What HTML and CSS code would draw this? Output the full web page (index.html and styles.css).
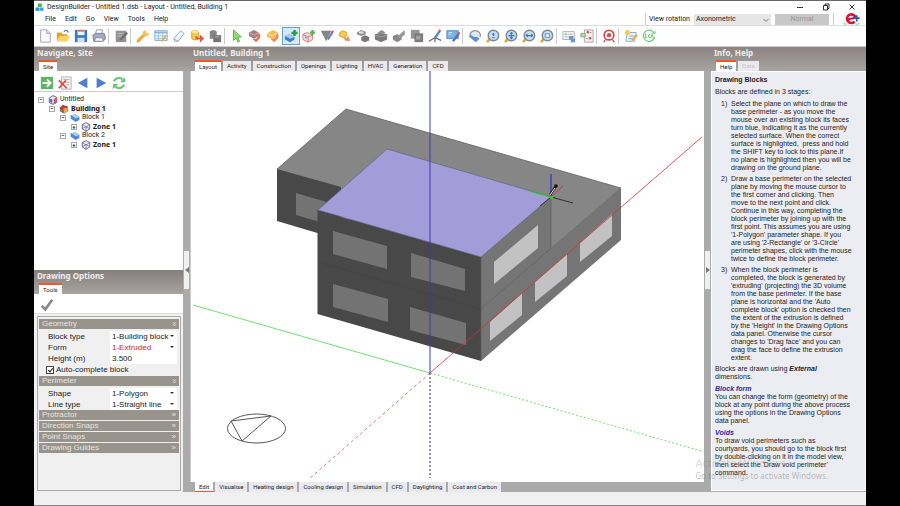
FILE: index.html
```html
<!DOCTYPE html>
<html lang="en">
 <head>
  <meta charset="UTF-8">
  <title>DesignBuilder</title>
  <link rel="stylesheet" href="styles.css">
 </head>
 <body>
  <svg class="defs" aria-hidden="true">
   <symbol id="lens" viewBox="0 0 16 16">
    <path d="M5 11L2 14" stroke="#e3ab35" stroke-width="3" stroke-linecap="round"/>
    <circle cx="8.5" cy="7.5" r="6" fill="#c3dcf2" stroke="#7f8790" stroke-width="1.6"/>
   </symbol>
   <symbol id="block" viewBox="0 0 16 16">
    <path d="M1 4L8 2L15 6V11L9 14L1 9Z" fill="#4a8fd8"/>
    <path d="M1 4L8 2L15 6L9 9Z" fill="#a9d0f5"/>
    <path d="M1 4L9 9V14" fill="none" stroke="#2f6db5"/>
   </symbol>
   <symbol id="zone" viewBox="0 0 16 16">
    <path d="M8 1L14 4V11L8 15L2 11V4Z" fill="#f0effa" stroke="#55528a" stroke-width="1.4"/>
    <path d="M2 4L8 8L14 4M8 8V15M2 11L8 7L14 11" fill="none" stroke="#55528a"/>
   </symbol>
  </svg>

  <div class="app">
   <header class="title">
    <svg class="logo" viewBox="0 0 16 16"><path d="M5 1H12V7H5Z" fill="#3cb54a"/><path d="M1 8H8V14H1Z" fill="#2b8fd6"/><path d="M9 8H15V14H9Z" fill="#35a7c9"/><path d="M5 1L7 0H13L12 1Z" fill="#8bdc8e"/></svg>
    <h1>DesignBuilder - Untitled 1.dsb - Layout - Untitled, Building 1</h1>
    <div class="win">
     <button aria-label="Minimize"><svg viewBox="0 0 8 8"><path d="M1 4.500H7"/></svg></button>
     <button aria-label="Restore"><svg viewBox="0 0 8 8"><path d="M1.500 2.500H5.500V7H1.500ZM3 2.500V1H7V5.500H5.500"/></svg></button>
     <button aria-label="Close"><svg viewBox="0 0 8 8"><path d="M1.500 1.500L6.500 6.500M6.500 1.500L1.500 6.500"/></svg></button>
    </div>
   </header>

   <div class="menubar">
    <nav class="menu">
     <button>File</button>
     <button>Edit</button>
     <button>Go</button>
     <button>View</button>
     <button>Tools</button>
     <button>Help</button>
    </nav>
    <div class="rotation">
     <label for="rot">View rotation</label>
     <span class="drop"><select id="rot"><option>Axonometric</option></select><svg viewBox="0 0 8 8"><path d="M1.500 3L4 5.500L6.500 3"/></svg></span>
     <button class="normal" disabled>Normal</button>
    </div>
    <svg class="brand" viewBox="0 0 20 14"><path d="M14 5A5 5 0 1 0 13 10" fill="none" stroke="#dd1133" stroke-width="3"/><path d="M5 7.500L14 5.500" stroke="#dd1133" stroke-width="2.500"/><path d="M12 6H19M15.500 2.500V10" stroke="#2a56b5" stroke-width="2"/><path d="M1 11V13H4M14 13H18V11" fill="none" stroke="#7cc896"/></svg>
   </div>

   <div class="toolbar">
    <button aria-label="New"><svg viewBox="0 0 16 16"><path d="M3 1H10L14 5V15H3Z" fill="#fbfbff" stroke="#9a9ab8"/><path d="M10 1V5H14" fill="#dde" stroke="#9a9ab8"/></svg></button>
    <button aria-label="Open"><svg viewBox="0 0 16 16"><path d="M1 4H6L8 6H13V14H1Z" fill="#e2a62e"/><path d="M4 8H16L13 14H1Z" fill="#fbd465"/><path d="M9 3C11 1 13 1 14 4" fill="none" stroke="#4a86c8" stroke-width="1.500"/></svg></button>
    <button aria-label="Save"><svg viewBox="0 0 16 16"><path d="M1 1H15V15H1Z" fill="#3b78c8"/><path d="M4 1H12V7H4Z" fill="#eef5fd"/><path d="M4 1H12V3H4Z" fill="#e26b51"/><path d="M4 10H12V15H4Z" fill="#cfdff0"/></svg></button>
    <button aria-label="Print"><svg viewBox="0 0 16 16"><path d="M5 1H12L11 7H4Z" fill="#fff" stroke="#8c8ca0"/><path d="M1 7L4 5H14L15 8V12L11 14H2Z" fill="#a9a9bd" stroke="#777790"/><path d="M4 10H12L13 14H3Z" fill="#f5f5fa" stroke="#8888a0"/></svg></button>
    <i></i>
    <button aria-label="Edit"><svg viewBox="0 0 16 16"><path d="M2 2H14V15H2Z" fill="#929292"/><path d="M4 5H11M4 8H9" stroke="#c4c4c4"/><path d="M6 12L14 3L16 5L8 13Z" fill="#6e6e6e"/></svg></button>
    <i></i>
    <button aria-label="Settings"><svg viewBox="0 0 16 16"><path d="M2.500 13.500L10 6" stroke="#edaa2e" stroke-width="3.500" stroke-linecap="round"/><path d="M14.500 4A3.500 3.500 0 1 1 11.500 1.500L11 4L12.500 5Z" fill="#f6c04b"/></svg></button>
    <button aria-label="Table"><svg viewBox="0 0 16 16"><path d="M1 2H15V13H1Z" fill="#fff" stroke="#6aa0d6"/><path d="M1 3H15V5H1Z" fill="#7fb2e4"/><path d="M1 8H15M1 11H15M5 3V13M10 3V13" stroke="#8db7df"/><path d="M9 14L14 7" stroke="#e2b14d" stroke-width="2"/></svg></button>
    <button aria-label="Erase"><svg viewBox="0 0 16 16"><path d="M2 11L10 2L14 5L7 14L3 14Z" fill="#eef5ff" stroke="#86a6cd"/><path d="M2 11L7 14" stroke="#86a6cd"/></svg></button>
    <button aria-label="Load data"><svg viewBox="0 0 16 16"><path d="M2 3C4 1 8 1 10 3V11C8 13 4 13 2 11Z" fill="#f3cb50" stroke="#cf9b28"/><ellipse cx="6" cy="3" rx="4" ry="1.500" fill="#fbe69c"/><path d="M7 8V11H12M12 8V14L15 11Z" fill="#e8794f" stroke="#dc5b3d" stroke-width="1.500"/></svg></button>
    <button aria-label="Library"><svg viewBox="0 0 16 16"><path d="M2 3C4 1 8 1 10 3V11H2Z" fill="#858585"/><path d="M6 7H15V15H6Z" fill="#747474"/><path d="M8 9H13" stroke="#c2c2c2"/></svg></button>
    <i></i>
    <button aria-label="Select"><svg viewBox="0 0 16 16"><path d="M4 1L13 9L9 9.500L11 14L9 15L7 10.500L4 13Z" fill="#8ed870" stroke="#62b048"/></svg></button>
    <button aria-label="Move block"><svg viewBox="0 0 16 16"><path d="M1 4L7 1L12 4V8L7 11L1 8Z" fill="#a18080"/><path d="M1 4L7 7L12 4" fill="none" stroke="#d6bcbc"/><path d="M12 4C16 7 14 12 9 15L5 11L9 11C11 10 12 7 12 4Z" fill="#e3795c"/></svg></button>
    <button aria-label="Rotate"><svg viewBox="0 0 16 16"><path d="M1 5L8 1L14 4V8L8 12L1 9Z" fill="#f0c05a"/><path d="M1 5L7 8L14 4" fill="none" stroke="#fbe7a8"/><path d="M13 5C16 8 14 12 9 15L5 11L9 11C11 10 12 8 13 5Z" fill="#e88e5e"/></svg></button>
    <button class="on" aria-label="Add block"><svg viewBox="0 0 16 16"><path d="M1 8L6 6L12 9V12L7 15L1 12Z" fill="#3c7fce"/><path d="M1 8L6 6L12 9L7 11Z" fill="#a7cdf2"/><path d="M12 1V8M8.500 4.500H15.500" stroke="#2ea23a" stroke-width="3"/></svg></button>
    <button aria-label="Add void"><svg viewBox="0 0 16 16"><path d="M1 6L6 4L12 7V12L7 15L1 12Z" fill="#f3dcdc" stroke="#d47a7a"/><path d="M1 6L7 9L12 7M7 9V15" fill="none" stroke="#d47a7a"/><path d="M3 10L6 12V9.500L3 8Z" fill="#84b4e4"/><path d="M12 1V7M9 4H15" stroke="#4db956" stroke-width="2.500"/></svg></button>
    <button aria-label="Draw surface"><svg viewBox="0 0 16 16"><path d="M1 2H13L7 14Z" fill="#848484"/><path d="M9 12L14 4" stroke="#5a83ca" stroke-width="2.500"/><path d="M13.500 4.500L15 2" stroke="#d55" stroke-width="2.500"/></svg></button>
    <button aria-label="Stretch"><svg viewBox="0 0 16 16"><path d="M2 4L6 2L10 4V8L6 10L2 8Z" fill="#f1cc4b" stroke="#c99e2d"/><path d="M6 9L8 13L14 14L12 8L10 10Z" fill="#e8956c"/></svg></button>
    <button aria-label="Clone"><svg viewBox="0 0 16 16"><path d="M1 4L6 1L11 3V6L6 8L1 6Z" fill="#8a8a8a"/><ellipse cx="6" cy="4" rx="3" ry="1.500" fill="#e1e1e1"/><path d="M6 9L10 7L15 9V13L10 15L6 13Z" fill="#777"/></svg></button>
    <button aria-label="Merge"><svg viewBox="0 0 16 16"><path d="M1 6L8 4L15 6V12L8 15L1 12Z" fill="#7c7c7c"/><path d="M4 4L9 1L13 4L9 6Z" fill="#919191"/><path d="M1 7L8 9L15 7" fill="none" stroke="#a3a3a3"/></svg></button>
    <button aria-label="Cut block"><svg viewBox="0 0 16 16"><path d="M1 8L6 6L11 8V12L6 15L1 12Z" fill="#878787"/><path d="M6 9L14 1L15 6L9 11Z" fill="#999"/></svg></button>
    <button aria-label="Group"><svg viewBox="0 0 16 16"><path d="M1 1H11V11H1Z" fill="#959595"/><path d="M5 5H15V15H5Z" fill="#7c7c7c"/><path d="M7 7.500H12V12H7Z" fill="#a3a3a3"/></svg></button>
    <button aria-label="Construction line"><svg viewBox="0 0 16 16"><path d="M1 14L8 10L15 13M8 10V15" fill="none" stroke="#686868" stroke-width="1.300"/><path d="M8 10L13 3" stroke="#4b83d4" stroke-width="2.500"/><path d="M12.500 3.500L14 1" stroke="#d55" stroke-width="2.500"/></svg></button>
    <button aria-label="Sketch"><svg viewBox="0 0 16 16"><path d="M1 2H14V11H1Z" fill="#7cb4e8" stroke="#4a86c8"/><path d="M3 4H7M3 6H6" stroke="#d9ecfc"/><path d="M8 14L14 6" stroke="#4877c4" stroke-width="2.500"/><path d="M13.500 6.500L15.500 4" stroke="#d55" stroke-width="2.500"/></svg></button>
    <i></i>
    <button aria-label="Orbit"><svg viewBox="0 0 16 16"><path d="M3 10A6 5.500 0 1 1 14 9" fill="#dce9f5" stroke="#8f979f" stroke-width="1.600"/><path d="M1 8L4 7L7 9L11 9L13 11L9 15L5 12Z" fill="#5b8fd0"/></svg></button>
    <button aria-label="Zoom"><svg viewBox="0 0 16 16"><use href="#lens"/><path d="M8.500 4.500V8M7 6H10M7 10H10" stroke="#4079bd" stroke-width="1.300"/></svg></button>
    <button aria-label="Zoom extents"><svg viewBox="0 0 16 16"><use href="#lens"/><path d="M8.500 4V11M5 7.500H12M7 5.500L8.500 4L10 5.500M7 9.500L8.500 11L10 9.500" fill="none" stroke="#4079bd" stroke-width="1.300"/></svg></button>
    <button aria-label="Pan"><svg viewBox="0 0 16 16"><use href="#lens"/><path d="M5 7.500H12M6.500 6L5 7.500L6.500 9M10.500 6L12 7.500L10.500 9" fill="none" stroke="#4079bd" stroke-width="1.500"/></svg></button>
    <button aria-label="Zoom window"><svg viewBox="0 0 16 16"><use href="#lens"/><path d="M6 5.500H11V9.500H6Z" fill="#ecf5fd" stroke="#4f88c8"/></svg></button>
    <i></i>
    <button aria-label="Export view"><svg viewBox="0 0 16 16"><path d="M1 3H14V12H1Z" fill="#f8f8f8" stroke="#a5aab0"/><path d="M3 5H6V7H3Z" fill="#8dc98c"/><path d="M7 6H12M3 9H9" stroke="#aaa"/><path d="M8 8H13V11H15V15H10V12H8Z" fill="#6b98d0"/></svg></button>
    <button aria-label="Compare"><svg viewBox="0 0 16 16"><path d="M5 1H15V15H5Z" fill="#f5eded" stroke="#a7a7a7"/><path d="M1 5H6V9H1Z" fill="#b4d5ab" stroke="#84a67e"/><path d="M9 2V5M7.500 3.500H10.500M11.500 9V12M10 10.500H13" stroke="#d14b55" stroke-width="1.500"/><path d="M11 4H13M7 11H9" stroke="#6b9b6b"/></svg></button>
    <i></i>
    <button aria-label="Optimise"><svg viewBox="0 0 16 16"><path d="M4 12L2 15M12 12L14 15" stroke="#9a5a5a" stroke-width="1.500"/><circle cx="8" cy="7" r="5.500" fill="#fff" stroke="#e04a4a" stroke-width="2"/><circle cx="8" cy="7" r="2.500" fill="#e04a4a"/></svg></button>
    <i></i>
    <button aria-label="Script"><svg viewBox="0 0 16 16"><path d="M4 4H14L12 14H2Z" fill="#eef3f8" stroke="#8aa6c2"/><circle cx="4" cy="4" r="3" fill="#f2cb50"/><path d="M6 8H12M5 11H10" stroke="#73a2cf"/><path d="M9 13L15 7" stroke="#dfa93f" stroke-width="2"/></svg></button>
    <button aria-label="LCA"><svg viewBox="0 0 16 16"><path d="M14 5A6.500 6.500 0 1 0 14.500 9" fill="none" stroke="#73cc7c" stroke-width="1.500"/><path d="M4 5V10H6M9.500 6A2 2 0 1 0 9.500 10M10 10.500L11.500 6L13 10.500" fill="none" stroke="#73cc7c" stroke-width="1.200"/><path d="M12 5H15V2" fill="none" stroke="#73cc7c"/></svg></button>
   </div>

   <main>
    <aside class="left">
     <section class="nav">
      <div class="head">
       <h2>Navigate, Site</h2>
       <div class="tabs"><button class="cur">Site</button></div>
      </div>
      <div class="navbar">
       <button aria-label="Go"><svg viewBox="0 0 16 16"><path d="M1 1H15V15H1Z" fill="#5cb765"/><path d="M3 8H12M8 4L12 8L8 12" fill="none" stroke="#fff" stroke-width="2.200"/></svg></button>
       <button aria-label="Delete"><svg viewBox="0 0 16 16"><path d="M4 1H15V15H4Z" fill="#f3f3f3" stroke="#aaa"/><path d="M6 4H13M9 7H13M9 10H13" stroke="#aaa"/><path d="M1 5L10 14M9 5L1 14" stroke="#dd4b43" stroke-width="2"/></svg></button>
       <button aria-label="Back"><svg viewBox="0 0 16 16"><path d="M13 2V14L2 8Z" fill="#4c7fd3"/></svg></button>
       <button aria-label="Forward"><svg viewBox="0 0 16 16"><path d="M3 2V14L14 8Z" fill="#4c7fd3"/></svg></button>
       <button aria-label="Refresh"><svg viewBox="0 0 16 16"><path d="M2 6C4 2 9 1 12 4M14 10C12 14 7 15 4 12" fill="none" stroke="#6cc474" stroke-width="2.500"/><path d="M15 1V7H9ZM1 15V9H7Z" fill="#6cc474"/></svg></button>
      </div>
      <ul class="tree">
       <li><div><b class="tog">−</b><svg viewBox="0 0 16 16"><path d="M2 5L8 1L14 4V12L8 15L2 12Z" fill="#fff" stroke="#59547a" stroke-width="1.500"/><path d="M3 6H7V13L3 11Z" fill="#4d78bc"/><path d="M9 6L14 4V12L9 14Z" fill="#c65b6c"/></svg><span>Untitled</span></div>
        <ul>
         <li><div><b class="tog">−</b><svg viewBox="0 0 16 16"><path d="M1 6L6 1L14 4L15 11L8 15L2 12Z" fill="#b8403a"/><path d="M7 7L14 6V12L8 15Z" fill="#e4a650"/><path d="M2 8L6 9V14L2 12Z" fill="#5d8b50"/></svg><span class="bold sel">Building 1</span></div>
          <ul>
           <li><div><b class="tog">−</b><svg><use href="#block"/></svg><span>Block 1</span></div>
            <ul><li><div><b class="tog">+</b><svg><use href="#zone"/></svg><span class="bold">Zone 1</span></div></li></ul>
           </li>
           <li><div><b class="tog">−</b><svg><use href="#block"/></svg><span>Block 2</span></div>
            <ul><li><div><b class="tog">+</b><svg><use href="#zone"/></svg><span class="bold">Zone 1</span></div></li></ul>
           </li>
          </ul>
         </li>
        </ul>
       </li>
      </ul>
     </section>

     <section class="options">
      <div class="head">
       <h2>Drawing Options</h2>
       <div class="tabs"><button class="cur">Tools</button></div>
      </div>
      <div class="apply"><button aria-label="Apply"><svg viewBox="0 0 16 16"><path d="M2 9L6 13L14 2" fill="none" stroke="#8a8a8a" stroke-width="3"/></svg></button></div>
      <div class="props">
       <h3>Geometry <span>&#xbb;</span></h3>
       <div class="rows">
        <label for="type">Block type</label>
        <span class="pick"><select id="type"><option>1-Building block</option></select></span>
        <label for="form">Form</label>
        <span class="pick red"><select id="form"><option>1-Extruded</option></select></span>
        <label for="height">Height (m)</label>
        <input id="height" type="text" value="3.500">
        <label class="check"><input type="checkbox" checked>Auto-complete block</label>
       </div>
       <h3>Perimeter <span>&#xbb;</span></h3>
       <div class="rows">
        <label for="shape">Shape</label>
        <span class="pick"><select id="shape"><option>1-Polygon</option></select></span>
        <label for="line">Line type</label>
        <span class="pick"><select id="line"><option>1-Straight line</option></select></span>
       </div>
       <h3 class="shut">Protractor <span>&#xbb;</span></h3>
       <h3 class="shut">Direction Snaps <span>&#xbb;</span></h3>
       <h3 class="shut">Point Snaps <span>&#xbb;</span></h3>
       <h3 class="shut">Drawing Guides <span>&#xbb;</span></h3>
      </div>
     </section>
    </aside>

    <div class="split"><button aria-label="Hide left panel"><svg viewBox="0 0 4 6"><path d="M4 0V6L0 3Z"/></svg></button></div>

    <section class="center">
     <div class="head">
      <h2>Untitled, Building 1</h2>
      <div class="tabs">
       <button class="cur">Layout</button>
       <button>Activity</button>
       <button>Construction</button>
       <button>Openings</button>
       <button>Lighting</button>
       <button>HVAC</button>
       <button>Generation</button>
       <button>CFD</button>
      </div>
     </div>
     <div class="view">
      <svg viewBox="191 71 513 411">
       <!-- axes behind the model -->
       <path d="M193 305L430 373" stroke="#70e070"/>
       <path d="M430 373L701 451" stroke="#70e070" stroke-dasharray="2 2"/>
       <path d="M430 373L309 479" stroke="#d87878" stroke-dasharray="3 3"/>
       <path d="M430 373V478" stroke="#6a6ac0" stroke-width="1.500" stroke-dasharray="2 2"/>
       <!-- lower block -->
       <path d="M277 169L346 109L621 188L481 309Z" fill="#868686"/>
       <path d="M277 169L346 109L621 188" fill="none" stroke="#5c5c5c" stroke-width=".7"/>
       <path d="M277 169L341 187V240L277 221Z" fill="#484848"/>
       <path d="M296 193L330 203V225L296 215Z" fill="#737373"/>
       <path d="M481 309L621 188V240L481 361Z" fill="#757575"/>
       <!-- upper block -->
       <path d="M317.500 210L481 257V361L317.500 314Z" fill="#484848"/>
       <path d="M318 262L481 309" stroke="#444"/>
       <path d="M481 257L551 197V249L481 309Z" fill="#757575"/>
       <path d="M481 309L621 188M551 197V249M481 257V361" fill="none" stroke="#5c5c5c" stroke-width=".7"/>
       <path d="M318 210L387 149L551 197L481 257Z" fill="#a29dd8" stroke="#5f5c80" stroke-width=".6"/>
       <!-- windows -->
       <g fill="#737373">
        <path d="M333 231L387 246V269L333 254Z"/>
        <path d="M411 253L465 269V291L411 277Z"/>
        <path d="M333 284L388 299V322L333 307Z"/>
        <path d="M410 307L466 323V345L410 330Z"/>
       </g>
       <g fill="#c2c2c2">
        <path d="M494 262L538 225V248L494 284Z"/>
        <path d="M490 322L522 293V315L490 341Z"/>
        <path d="M535 282L567 254V276L535 302Z"/>
        <path d="M580 243L612 214V236L580 262Z"/>
       </g>
       <path d="M430 373L702 137" stroke="#d83030" stroke-opacity=".8"/>
       <path d="M430 71V373" stroke="#3838b8" stroke-opacity=".65" stroke-width="1.500"/>
       <!-- drawing cursor -->
       <path d="M551 174V197" stroke="#4040c0" stroke-width="1.500"/>
       <path d="M551 197L563 186" stroke="#c84040"/>
       <path d="M540 206L551 197L573 203" fill="none" stroke="#333"/>
       <path d="M529 191L551 197" stroke="#20d020" stroke-width="1.200"/>
       <path d="M550 195L556 186" stroke="#222" stroke-width="2.500"/>
       <path d="M550 195L555 188" stroke="#eee"/>
       <circle cx="556" cy="186" r="1.800" fill="#111"/>
       <circle cx="551.500" cy="197.500" r="1.500" fill="#20e020"/>
       <!-- north arrow -->
       <g fill="none" stroke="#444" stroke-width=".9">
        <ellipse cx="256.500" cy="428.500" rx="29" ry="14.500"/>
        <path d="M231 421L271 416L242 441Z"/>
       </g>
      </svg>
     </div>
     <div class="tabs bottom">
      <button class="cur">Edit</button>
      <button>Visualise</button>
      <button>Heating design</button>
      <button>Cooling design</button>
      <button>Simulation</button>
      <button>CFD</button>
      <button>Daylighting</button>
      <button>Cost and Carbon</button>
     </div>
    </section>

    <div class="split"><button aria-label="Hide help panel"><svg viewBox="0 0 4 6"><path d="M0 0V6L4 3Z"/></svg></button></div>

    <aside class="right">
     <div class="head">
      <h2>Info, Help</h2>
      <div class="tabs"><button class="cur">Help</button><button disabled>Data</button></div>
     </div>
     <article class="help">
      <h3>Drawing Blocks</h3>
      <p>Blocks are defined in 3 stages:</p>
      <ol>
       <li>Select the plane on which to draw the<br>base perimeter - as you move the<br>mouse over an existing block its faces<br>turn blue, indicating it as the currently<br>selected surface. When the correct<br>surface is highlighted,&nbsp; press and hold<br>the SHIFT key to lock to this plane.If<br>no plane is highlighted then you will be<br>drawing on the ground plane.</li>
       <li>Draw a base perimeter on the selected<br>plane by moving the mouse cursor to<br>the first corner and clicking. Then<br>move to the next point and click.<br>Continue in this way, completing the<br>block perimeter by joining up with the<br>first point. This assumes you are using<br>'1-Polygon' parameter shape. If you<br>are using '2-Rectangle' or '3-Circle'<br>perimeter shapes, click with the mouse<br>twice to define the block perimeter.</li>
       <li>When the block perimeter is<br>completed, the block is generated by<br>'extruding' (projecting) the 3D volume<br>from the base perimeter. If the base<br>plane is horizontal and the 'Auto<br>complete block' option is checked then<br>the extent of the extrusion is defined<br>by the 'Height' in the Drawing Options<br>data panel. Otherwise the cursor<br>changes to 'Drag face' and you can<br>drag the face to define the extrusion<br>extent.</li>
      </ol>
      <p>Blocks are drawn using <em>External</em><br>dimensions.</p>
      <h4>Block form</h4>
      <p>You can change the form (geometry) of the<br>block at any point during the above process<br>using the options in the Drawing Options<br>data panel.</p>
      <h4>Voids</h4>
      <p>To draw void perimeters such as<br>courtyards, you should go to the block first<br>by double-clicking on it in the model view,<br>then select the 'Draw void perimeter'<br>command.</p>
     </article>
    </aside>

    <div class="activate">
     <p class="big">Activate Windows</p>
     <p>Go to Settings to activate Windows.</p>
    </div>
   </main>
   <footer class="status"></footer>
  </div>
 </body>
</html>
```
FILE: styles.css
```css
*{ margin:0; padding:0; box-sizing:border-box;}

body{
 background:#000;
 color:#222;
 font-family:Roboto,"Liberation Sans",sans-serif;
 font-size:7px;
}
button,select,input{
 font:inherit;
 color:inherit;
 border:0;
 background:none;
 border-radius:0;
}
ul,ol{ list-style:none;}
svg{ display:block; fill:none;}
.defs{ width:0; height:0; position:absolute;}

.app{
 min-height:100vh;
 margin:0 34px;
 display:flex;
 flex-direction:column;
 background:#fefefe;
 border-top:1px solid #666;
 border-bottom:1px solid #888;
}

/* title and menu */
.title{
 display:flex;
 align-items:center;
 height:12px;
 padding-left:1px;
}
.logo{ width:9px; height:9px; margin-right:3px;}
.title h1{ flex:1; font-size:7px; font-weight:normal;}
.win{ display:flex; gap:18px; padding-right:10px;}
.win svg{ width:8px; height:8px; stroke:#333;}

.menubar{
 display:flex;
 height:13px;
 border-bottom:1px solid #ddd;
}
.menu{
 flex:1;
 display:flex;
 gap:9px;
 padding-left:11px;
}
.rotation{
 display:flex;
 align-items:center;
 gap:4px;
 padding:0 4px 0 3px;
 border-left:1px solid #ccc;
 border-right:1px solid #ccc;
}
.drop{ position:relative; width:77px;}
.drop select{
 display:block;
 width:100%;
 height:11px;
 padding-left:2px;
 appearance:none;
 background:#e6e6e6;
}
.drop svg{
 width:8px;
 height:8px;
 position:absolute;
 right:1px;
 top:2px;
 stroke:#777;
 pointer-events:none;
}
.normal{ width:54px; height:11px; background:#c8c8c8; color:#999;}
.brand{ width:18px; height:12px; margin:0 5px 0 9px;}

/* toolbar */
.toolbar{
 display:flex;
 align-items:center;
 height:21px;
 padding-left:2px;
 border-bottom:1px solid #ccc;
}
.toolbar button{
 width:18px;
 height:18px;
 padding:2px;
}
.toolbar button svg{ width:14px; height:14px;}
.toolbar .on{
 padding:1px;
 background:#d5e9f8;
 border:1px solid #62a2d8;
}
.toolbar i{
 width:1px;
 height:16px;
 margin-right:3px;
 background:#ccc;
}

/* panels */
main{
 flex:1;
 display:flex;
 position:relative;
 background:linear-gradient(#8b8482,#a7a4a2 24px,#ababab 24px);
}
.left{ width:149px; display:flex; flex-direction:column;}
.center{ flex:1; min-width:0; display:flex; flex-direction:column;}
.right{ width:155px; display:flex; flex-direction:column;}
.head{
 display:flex;
 flex-direction:column;
 justify-content:space-between;
 height:24px;
 padding:0 3px;
}
.head h2{
 color:#f0eeec;
 font-family:"Noto Sans",sans-serif;
 font-size:8px;
 line-height:12px;
}
.tabs{ display:flex; gap:2px; padding-left:2px;}
.tabs button{
 height:10px;
 padding:0 4px;
 background:#e9e9ee;
 font-size:6px;
 line-height:10px;
 white-space:nowrap;
}
.tabs .cur{
 height:11px;
 background:#fff;
 border-top:2px solid #f0582a;
}
.tabs button:disabled{ color:#c6c6c6;}
.head .tabs{ align-items:flex-end;}
.tabs.bottom{ padding-left:5px;}
.bottom .cur{ height:10px; border-top:0; border-bottom:1px solid #f0582a;}

.nav{ height:223px; display:flex; flex-direction:column;}
.navbar{
 display:flex;
 gap:4px;
 height:21px;
 padding:4px 6px 0;
 background:#fff;
 border-bottom:1px solid #ccc;
}
.navbar svg{ width:14px; height:14px;}
.tree{
 line-height:9px;
 background:#fff;
}
.nav > .tree{ flex:1; padding:3px 0 0 4px;}
.tree ul{ padding-left:11px;}
.tree div{ display:flex; align-items:center; height:9px;}
.tree svg{ width:10px; height:10px; margin:0 2px 0 4px;}
.tog{
 width:6px;
 height:6px;
 border:1px solid #aaa;
 font-size:6px;
 line-height:4px;
 text-align:center;
}
.bold{ font-family:"Noto Sans",sans-serif; font-weight:bold;}
.sel{ background:#eee;}

.options{ flex:1; display:flex; flex-direction:column; background:#f0f0f0;}
.options .head{ background:linear-gradient(#857e7c,#a7a4a2);}
.apply{
 height:20px;
 padding:4px 6px;
 background:#fff;
 border-bottom:1px solid #ddd;
}
.apply svg{ width:14px; height:14px;}
.props{
 flex:1;
 margin:2px 2px 1px 3px;
 padding:2px 1px;
 border:1px solid #aaa;
 font-family:"Liberation Sans",Arial,sans-serif;
 font-size:8px;
}
.props h3{
 display:flex;
 justify-content:space-between;
 height:10px;
 padding:0 3px;
 background:#98948b;
 color:#e8e6e0;
 font-size:8px;
 font-weight:normal;
 line-height:10px;
}
.props h3 span{ transform:rotate(90deg);}
.props h3.shut span{ transform:none;}
.props h3.shut + .shut{ margin-top:1px;}
.rows{
 display:grid;
 grid-template-columns:62px 1fr;
 grid-auto-rows:11px;
 align-items:center;
 padding:2px 2px 0 9px;
}
.rows + h3:not(.shut){ margin-top:1px;}
.rows > input,.pick,.pick select{
 width:100%;
 height:11px;
 background:#fff;
}
.rows > input{ padding-left:2px;}
.pick{ position:relative;}
.pick select{ display:block; appearance:none; padding-left:2px;}
.pick:after{
 content:"";
 position:absolute;
 right:3px;
 top:4px;
 border:2px solid transparent;
 border-top-color:#333;
}
.red{ color:#cc2233;}
.check{
 grid-column:1 / 3;
 display:flex;
 align-items:center;
 gap:2px;
 margin-left:-2px;
}
.check input{
 width:8px;
 height:8px;
 appearance:none;
 position:relative;
 background:#fff;
 border:1px solid #444;
}
.check input:checked:after{
 content:"";
 position:absolute;
 left:2px;
 top:0;
 width:2px;
 height:4px;
 border:solid #222;
 border-width:0 1px 1px 0;
 transform:rotate(40deg);
}

.split{
 width:7px;
 display:flex;
 align-items:center;
 justify-content:center;
}
.split button{
 display:flex;
 align-items:center;
 justify-content:center;
 width:5px;
 height:38px;
 background:#f0f0f0;
}
.split svg{ width:4px; height:6px; fill:#777;}

.view{
 flex:1;
 min-height:0;
 background:#fff;
 border-left:1px solid #ccc;
}
.view svg{ width:100%;}

/* help text */
.help{
 flex:1;
 margin-bottom:1px;
 padding:4px 3px;
 background:#ecedf3;
 border:1px solid #fff;
 font-family:"Liberation Sans",Arial,sans-serif;
 font-size:7px;
 line-height:8px;
 white-space:nowrap;
}
.help h3,.help h4{ font-size:7px;}
.help h3,.help p{ margin-bottom:4px;}
.help h4{ color:#2a2a9a; font-style:italic;}
.help em{ font-weight:bold;}
.help ol{ counter-reset:n;}
.help li{
 display:grid;
 grid-template-columns:16px 1fr;
 margin-bottom:3px;
 counter-increment:n;
}
.help li:before{ content:counter(n) ")"; padding-left:6px;}

/* watermark over the panels */
.activate{
 position:absolute;
 right:38px;
 bottom:10px;
 color:rgba(110,110,110,.45);
 font-family:"Noto Sans",sans-serif;
 font-size:8px;
 line-height:12px;
 pointer-events:none;
}
.activate .big{ font-size:11px; line-height:14px; color:rgba(130,130,130,.3);}

.status{ height:13px; background:#f0f0f0;}
```
